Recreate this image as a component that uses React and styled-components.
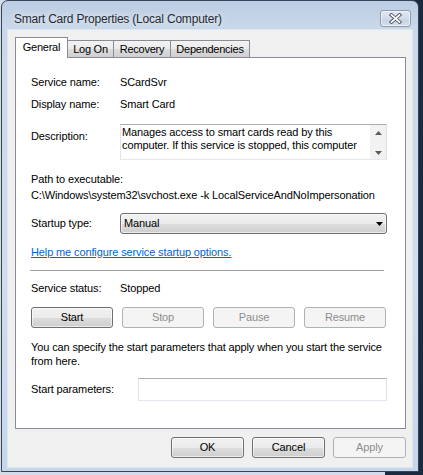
import React from 'react';
import styled, { createGlobalStyle } from 'styled-components';

const Global = createGlobalStyle`
  html, body { margin: 0; padding: 0; }
  body {
    width: 423px;
    height: 475px;
    overflow: hidden;
    background: linear-gradient(to right, #d3dce7 0, #d3dce7 385px, #1b2a3f 385px);
    font-family: "Liberation Sans", Arial, sans-serif;
  }
`;

const Window = styled.div`
  box-sizing: border-box;
  margin-left: 1px;
  width: 418px;
  height: 472px;
  border: 1px solid #34445a;
  border-radius: 7px 7px 0 0;
  background: linear-gradient(to bottom, #bccde2 0px, #cad9ea 30px, #cfdded 60%, #c6d7ea 100%);
  display: flex;
  flex-direction: column;
  padding: 0 6px 4px 6px;
`;

const TitleBar = styled.div`
  height: 29px;
  flex: none;
  display: flex;
  align-items: flex-start;
  justify-content: space-between;
  padding: 9px 1px 0 6px;
  box-sizing: border-box;
`;

const Title = styled.div`
  margin-top: 2px;
  font-family: "Liberation Sans", Arial, sans-serif;
  font-size: 12px;
  line-height: 15px;
  letter-spacing: -0.2px;
  color: #262b33;
  text-shadow: 0 0 6px rgba(255, 255, 255, 0.9);
`;

const CloseButton = styled.div`
  box-sizing: border-box;
  width: 31px;
  height: 17px;
  border: 1px solid #8e9bad;
  border-radius: 3px;
  background: linear-gradient(to bottom, #dfe7f1 0%, #d2dcea 50%, #c6d3e4 51%, #d3deeb 100%);
  box-shadow: inset 0 0 0 1px rgba(255, 255, 255, 0.55);
  display: flex;
  align-items: center;
  justify-content: center;
`;

const Client = styled.div`
  flex: 1;
  background: #f0f0f0;
  display: flex;
  flex-direction: column;
  padding: 7px 6px 9px 7px;
  box-shadow: 0 0 0 1px #dde7f2;
`;

const TabStrip = styled.div`
  display: flex;
  align-items: flex-end;
  height: 21px;
  margin-bottom: -1px;
  position: relative;
  z-index: 1;
`;

const Tab = styled.div`
  box-sizing: border-box;
  width: ${(p) => p.$w}px;
  height: ${(p) => (p.$active ? 21 : 17)}px;
  margin-left: ${(p) => (p.$first ? 0 : -1)}px;
  margin-bottom: ${(p) => (p.$active ? 0 : 1)}px;
  border: 1px solid #898c95;
  border-bottom: none;
  background: ${(p) =>
    p.$active
      ? '#ffffff'
      : 'linear-gradient(to bottom, #f2f2f2 0%, #ebebeb 50%, #dddddd 51%, #cfcfcf 100%)'};
  font-size: 11px;
  letter-spacing: -0.25px;
  color: #000;
  display: flex;
  align-items: center;
  justify-content: center;
  padding-bottom: ${(p) => (p.$active ? 3 : 0)}px;
`;

const Panel = styled.div`
  box-sizing: border-box;
  height: 372px;
  flex: none;
  border: 1px solid #898c95;
  background: #ffffff;
  padding: 18px 18px 0 15px;
  display: flex;
  flex-direction: column;
  font-size: 11px;
  letter-spacing: -0.12px;
  line-height: 13px;
  color: #000;
`;

const FieldRow = styled.div`
  display: grid;
  grid-template-columns: ${(p) => p.$label || 89}px 1fr;
  align-items: ${(p) => p.$align || 'start'};
  margin-top: ${(p) => p.$mt || 0}px;
`;

const Label = styled.div`
  white-space: nowrap;
  margin-top: ${(p) => p.$mt || 0}px;
`;

const Value = styled.div`
  white-space: nowrap;
`;

const Line = styled.div`
  white-space: nowrap;
  margin-top: ${(p) => p.$mt || 0}px;
`;

const DescBox = styled.div`
  box-sizing: border-box;
  height: 36px;
  border: 1px solid;
  border-color: #abadb3 #dbdfe6 #e3e9ef #e2e3ea;
  display: flex;
  background: #fff;
`;

const DescText = styled.div`
  flex: 1;
  padding: 1px 0 0 1px;
  white-space: nowrap;
  overflow: hidden;
`;

const ScrollBar = styled.div`
  width: 16px;
  flex: none;
  background: #f2f2f2;
  display: flex;
  flex-direction: column;
  justify-content: space-between;
  align-items: center;
  padding: 6px 0 4px;
  box-sizing: border-box;
`;

const Select = styled.div`
  box-sizing: border-box;
  height: 21px;
  border: 1px solid #707070;
  border-radius: 3px;
  background: linear-gradient(to bottom, #f2f2f2 0%, #ebebeb 50%, #dddddd 51%, #cfcfcf 100%);
  box-shadow: inset 0 0 0 1px rgba(255, 255, 255, 0.6);
  display: flex;
  align-items: center;
  justify-content: space-between;
  padding: 0 3px 0 3px;
`;

const Link = styled.a`
  display: block;
  margin-top: 12px;
  color: #0066cc;
  text-decoration: underline;
  white-space: nowrap;
  align-self: flex-start;
  cursor: pointer;
`;

const Separator = styled.div`
  height: 1px;
  margin: 11px 3px 0 -1px;
  background: #a0a0a0;
`;

const ServiceButtons = styled.div`
  display: flex;
  justify-content: space-between;
  margin: 12px 1px 0 0;
`;

const Button = styled.div`
  box-sizing: border-box;
  width: ${(p) => p.$w}px;
  height: 21px;
  border: 1px solid ${(p) => (p.$disabled ? '#adb2b5' : '#707070')};
  border-radius: 3px;
  background: ${(p) =>
    p.$disabled
      ? '#f4f4f4'
      : 'linear-gradient(to bottom, #f2f2f2 0%, #ebebeb 50%, #dddddd 51%, #cfcfcf 100%)'};
  box-shadow: inset 0 0 0 1px rgba(255, 255, 255, ${(p) => (p.$disabled ? 0 : 0.6)});
  color: ${(p) => (p.$disabled ? '#8d8d8d' : '#000')};
  font-size: 11px;
  letter-spacing: -0.12px;
  line-height: 13px;
  display: flex;
  align-items: center;
  justify-content: center;
  font-family: "Liberation Sans", Arial, sans-serif;
`;

const Paragraph = styled.div`
  margin-top: 12px;
  line-height: 14px;
  white-space: nowrap;
`;

const TextInput = styled.div`
  box-sizing: border-box;
  height: 23px;
  border: 1px solid;
  border-color: #abadb3 #dbdfe6 #e3e9ef #e2e3ea;
  background: #fff;
`;

const DialogButtons = styled.div`
  display: flex;
  justify-content: flex-end;
  gap: 8px;
  margin-top: 8px;
`;

const Arrow = ({ dir = 'down', w = 7, h = 4, color = '#000' }) => (
  <svg width={w} height={h} viewBox={`0 0 ${w} ${h}`}>
    {dir === 'down' ? (
      <polygon points={`0,0 ${w},0 ${w / 2},${h}`} fill={color} />
    ) : (
      <polygon points={`0,${h} ${w},${h} ${w / 2},0`} fill={color} />
    )}
  </svg>
);

const CloseGlyph = () => (
  <svg width="13" height="11" viewBox="0 0 13 11">
    <path d="M2.5 2 L10.5 9 M10.5 2 L2.5 9" stroke="#4f5866" strokeWidth="3.6" strokeLinecap="square" />
    <path d="M2.5 2 L10.5 9 M10.5 2 L2.5 9" stroke="#ffffff" strokeWidth="1.7" strokeLinecap="square" />
  </svg>
);

export default function App() {
  return (
    <>
      <Global />
      <Window>
        <TitleBar>
          <Title>Smart Card Properties (Local Computer)</Title>
          <CloseButton>
            <CloseGlyph />
          </CloseButton>
        </TitleBar>
        <Client>
          <TabStrip>
            <Tab $w={53} $first $active>General</Tab>
            <Tab $w={47}>Log On</Tab>
            <Tab $w={58}>Recovery</Tab>
            <Tab $w={80}>Dependencies</Tab>
          </TabStrip>
          <Panel>
            <FieldRow>
              <Label>Service name:</Label>
              <Value>SCardSvr</Value>
            </FieldRow>
            <FieldRow $mt={9}>
              <Label>Display name:</Label>
              <Value>Smart Card</Value>
            </FieldRow>
            <FieldRow $mt={13}>
              <Label $mt={6}>Description:</Label>
              <DescBox>
                <DescText>
                  Manages access to smart cards read by this
                  <br />
                  computer. If this service is stopped, this computer
                </DescText>
                <ScrollBar>
                  <Arrow dir="up" w={7} h={4} color="#5a5a5a" />
                  <Arrow dir="down" w={7} h={4} color="#5a5a5a" />
                </ScrollBar>
              </DescBox>
            </FieldRow>
            <Line $mt={13}>Path to executable:</Line>
            <Line $mt={3}>C:\Windows\system32\svchost.exe -k LocalServiceAndNoImpersonation</Line>
            <FieldRow $mt={11} $align="center">
              <Label>Startup type:</Label>
              <Select>
                <span>Manual</span>
                <Arrow dir="down" w={7} h={4} />
              </Select>
            </FieldRow>
            <Link>Help me configure service startup options.</Link>
            <Separator />
            <FieldRow $mt={11}>
              <Label>Service status:</Label>
              <Value>Stopped</Value>
            </FieldRow>
            <ServiceButtons>
              <Button $w={82}>Start</Button>
              <Button $w={82} $disabled>Stop</Button>
              <Button $w={82} $disabled>Pause</Button>
              <Button $w={82} $disabled>Resume</Button>
            </ServiceButtons>
            <Paragraph>
              You can specify the start parameters that apply when you start the service
              <br />
              from here.
            </Paragraph>
            <FieldRow $mt={10} $align="center" $label={107}>
              <Label>Start parameters:</Label>
              <TextInput />
            </FieldRow>
          </Panel>
          <DialogButtons>
            <Button $w={73}>OK</Button>
            <Button $w={73}>Cancel</Button>
            <Button $w={73} $disabled>Apply</Button>
          </DialogButtons>
        </Client>
      </Window>
    </>
  );
}
